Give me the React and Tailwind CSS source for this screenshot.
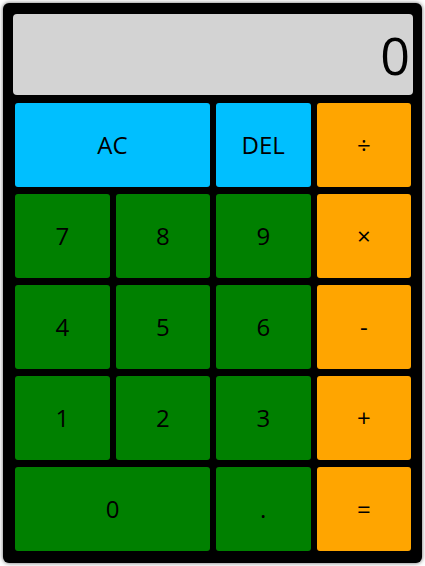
const keys = [
  { label: 'AC', color: 'bg-[#00bfff]', span: 'col-span-2' },
  { label: 'DEL', color: 'bg-[#00bfff]' },
  { label: '÷', color: 'bg-[#ffa500]' },
  { label: '7', color: 'bg-[#008000]' },
  { label: '8', color: 'bg-[#008000]' },
  { label: '9', color: 'bg-[#008000]' },
  { label: '×', color: 'bg-[#ffa500]' },
  { label: '4', color: 'bg-[#008000]' },
  { label: '5', color: 'bg-[#008000]' },
  { label: '6', color: 'bg-[#008000]' },
  { label: '-', color: 'bg-[#ffa500]' },
  { label: '1', color: 'bg-[#008000]' },
  { label: '2', color: 'bg-[#008000]' },
  { label: '3', color: 'bg-[#008000]' },
  { label: '+', color: 'bg-[#ffa500]' },
  { label: '0', color: 'bg-[#008000]', span: 'col-span-2' },
  { label: '.', color: 'bg-[#008000]' },
  { label: '=', color: 'bg-[#ffa500]' },
]

function Key({ label, color, span = '' }) {
  return (
    <button
      className={`${color} ${span} h-[84px] rounded-[3px] text-[24px] text-black flex items-center justify-center`}
    >
      {label}
    </button>
  )
}

export default function App() {
  return (
    <div className="p-[3px] font-['Open_Sans',sans-serif]">
      <div className="w-[419px] h-[560px] bg-black rounded-[6px] shadow-[0_0_4px_rgba(0,0,0,0.6)] pt-[11px] pl-[10px]">
        <div className="w-[400px] h-[81px] bg-[#d3d3d3] rounded-[4px] flex items-center justify-end pr-[3px] text-[52px] leading-none text-black">
          0
        </div>
        <div className="mt-[8px] ml-[2px] w-[396px] grid grid-cols-4 gap-x-[6px] gap-y-[7px]">
          {keys.map((k) => (
            <Key key={k.label} {...k} />
          ))}
        </div>
      </div>
    </div>
  )
}
